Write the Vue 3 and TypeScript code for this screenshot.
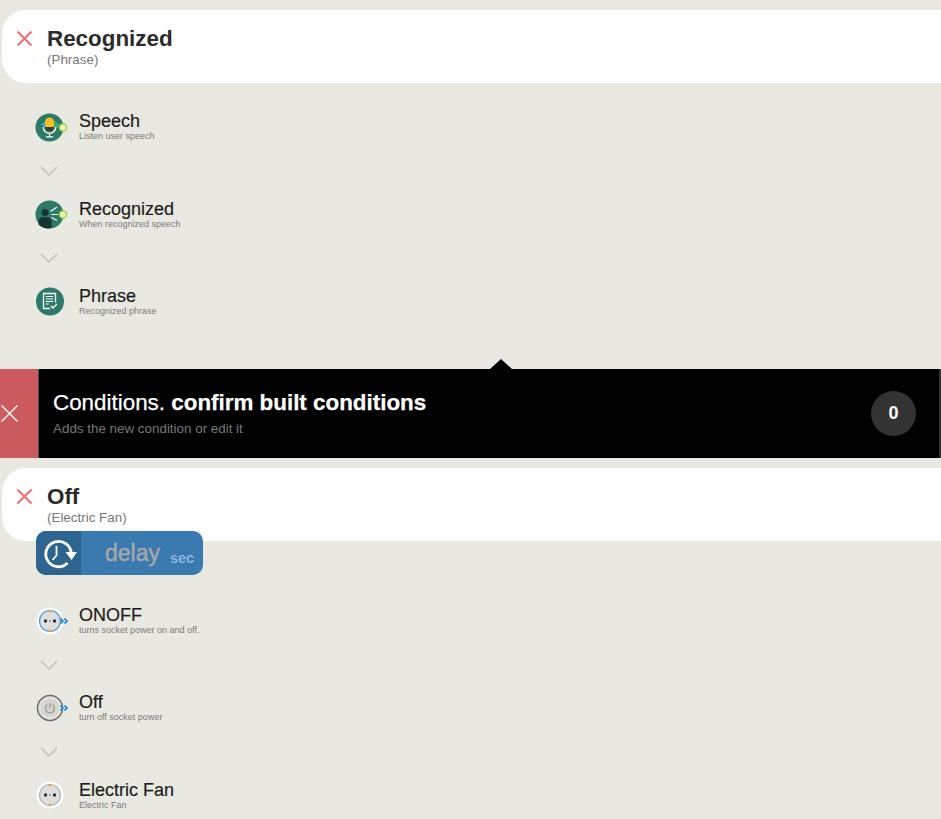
<script setup lang="ts">
interface Step {
  icon: string;
  title: string;
  sub: string;
  lift?: boolean;
}

const triggerSteps: Step[] = [
  { icon: 'speech', title: 'Speech', sub: 'Listen user speech', lift: true },
  { icon: 'recognized', title: 'Recognized', sub: 'When recognized speech' },
  { icon: 'phrase', title: 'Phrase', sub: 'Recognized phrase' },
];

const actionSteps: Step[] = [
  { icon: 'onoff', title: 'ONOFF', sub: 'turns socket power on and off.', lift: true },
  { icon: 'off', title: 'Off', sub: 'turn off socket power', lift: true },
  { icon: 'socket', title: 'Electric Fan', sub: 'Electric Fan' },
];
</script>

<template>
  <div class="page">
    <div class="card">
      <svg class="card-x" width="17" height="17" viewBox="0 0 17 17">
        <path d="M1.5 1.5l14 14M15.5 1.5l-14 14" />
      </svg>
      <div class="card-text">
        <div class="card-title">Recognized</div>
        <div class="card-sub">(Phrase)</div>
      </div>
    </div>

    <div class="steps steps-top">
      <template v-for="(step, i) in triggerSteps" :key="step.title">
        <div class="step">
          <svg class="step-icon" width="40" height="40" viewBox="0 0 40 40">
            <template v-if="step.icon === 'speech'">
              <circle cx="19.5" cy="20.500" r="14" fill="#2d7a68" />
              <path d="M10.500 17.500l5-3.500v7z" fill="#2a9fd0" />
              <path d="M24 13l6 5.500-6 5.500z" fill="#37a86f" />
              <rect x="15" y="10.500" width="9" height="14" rx="4.500" fill="#f3c01c" />
              <path d="M15 20h9v0.500a4.500 4 0 0 1-9 0z" fill="#2c3f3a" />
              <path d="M13.200 20a6.300 6.300 0 0 0 12.600 0M19.500 26.500v3M16 29.800h7" fill="none" stroke="#fff" stroke-width="1.200" />
              <circle cx="33" cy="20.500" r="3.600" fill="#e6f5c0" stroke="#9fd03c" stroke-width="1.500" />
            </template>
            <template v-else-if="step.icon === 'recognized'">
              <circle cx="19.500" cy="20.500" r="14" fill="#2d7a68" />
              <circle cx="15" cy="18.500" r="3.600" fill="#17352f" />
              <path d="M8.500 30.500v-4a6.500 3.500 0 0 1 13 0V34a14 14 0 0 1-13-3.500z" fill="#17352f" />
              <path d="M20.500 17.500l6.500-4.500M21.500 20.500h6.500M21.500 23.500l5.500 3" fill="none" stroke="#fff" stroke-width="1.200" />
              <circle cx="33" cy="20.500" r="3.600" fill="#e6f5c0" stroke="#9fd03c" stroke-width="1.500" />
            </template>
            <template v-else-if="step.icon === 'phrase'">
              <circle cx="20" cy="20.500" r="14" fill="#2d7a68" />
              <path d="M20 27.500h-6.500v-15h12v9" fill="none" stroke="#fff" stroke-width="1.300" />
              <path d="M15.800 15.500h7.400M15.800 18h7.400M15.800 20.500h7.400M15.800 23h3" fill="none" stroke="#fff" stroke-width="1" />
              <path d="M21 25l2 2 4-4" fill="none" stroke="#fff" stroke-width="1.300" />
            </template>
          </svg>
          <div :class="{ lifted: step.lift }">
            <div class="step-title">{{ step.title }}</div>
            <div class="step-sub">{{ step.sub }}</div>
          </div>
        </div>
        <div v-if="i < triggerSteps.length - 1" class="step-link">
          <svg width="18" height="10" viewBox="0 0 18 10"><path d="M1 1l8 8 8-8" /></svg>
        </div>
      </template>
    </div>

    <div class="bar">
      <span class="bar-notch"></span>
      <div class="bar-close">
        <svg width="19" height="19" viewBox="0 0 19 19">
          <path d="M1.5 1.5l16 16M17.5 1.5l-16 16" />
        </svg>
      </div>
      <div class="bar-text">
        <div class="bar-title">Conditions. <b>confirm built conditions</b></div>
        <div class="bar-sub">Adds the new condition or edit it</div>
      </div>
      <div class="bar-count">0</div>
    </div>

    <div class="card">
      <svg class="card-x" width="17" height="17" viewBox="0 0 17 17">
        <path d="M1.5 1.5l14 14M15.5 1.5l-14 14" />
      </svg>
      <div class="card-text">
        <div class="card-title">Off</div>
        <div class="card-sub">(Electric Fan)</div>
      </div>
    </div>

    <div class="delay">
      <div class="delay-icon">
        <svg width="36" height="36" viewBox="0 0 36 36">
          <path d="M30.200 19A12.700 12.700 0 1 0 26.500 28" fill="none" stroke="#fff" stroke-width="2.800" />
          <path d="M24.500 17H36l-5.500 8z" fill="#fff" />
          <path d="M15.500 11v9.500l-4 4.500" fill="none" stroke="#fff" stroke-width="1.800" />
        </svg>
      </div>
      <span class="delay-label">delay</span>
      <span class="delay-unit">sec</span>
    </div>

    <div class="steps steps-bottom">
      <template v-for="(step, i) in actionSteps" :key="step.title">
        <div class="step">
          <svg class="step-icon" width="40" height="40" viewBox="0 0 40 40">
            <template v-if="step.icon === 'onoff' || step.icon === 'socket'">
              <circle cx="20" cy="20" r="13.500" fill="#fff" />
              <circle cx="20" cy="20" r="10.500" fill="#dedede" :stroke="step.icon === 'onoff' ? '#4a9ad4' : '#b4b4b4'" stroke-width="1.200" />
              <circle cx="15.500" cy="20" r="1.700" fill="#333" />
              <circle cx="24.500" cy="20" r="1.700" fill="#333" />
              <circle cx="20" cy="20" r="0.900" fill="#888" />
              <path d="M20 9v2.500M20 28.500V31" stroke="#e8a33c" stroke-width="2.200" />
            </template>
            <template v-else-if="step.icon === 'off'">
              <circle cx="20" cy="20" r="12.500" fill="#e4e4de" stroke="#6a6a6a" stroke-width="1.500" />
              <circle cx="20" cy="20" r="9.500" fill="#d6d6d0" />
              <path d="M17.300 16.800a4.500 4.500 0 1 0 5.400 0" fill="none" stroke="#a2a29c" stroke-width="1.500" />
              <path d="M20 14.500v5" stroke="#a2a29c" stroke-width="1.500" />
            </template>
            <path v-if="step.icon !== 'socket'" d="M30.500 17.500l2.500 2.500-2.500 2.500M34.500 17.500l2.500 2.500-2.500 2.500" fill="none" stroke="#2a8fd8" stroke-width="1.800" />
          </svg>
          <div :class="{ lifted: step.lift }">
            <div class="step-title">{{ step.title }}</div>
            <div class="step-sub">{{ step.sub }}</div>
          </div>
        </div>
        <div v-if="i < actionSteps.length - 1" class="step-link">
          <svg width="18" height="10" viewBox="0 0 18 10"><path d="M1 1l8 8 8-8" /></svg>
        </div>
      </template>
    </div>
  </div>
</template>

<style scoped>
.page {
  width: 941px;
  height: 819px;
  overflow: hidden;
  padding-top: 10px;
  box-sizing: border-box;
  background: #eae9e1;
  font-family: "Liberation Sans", Arial, sans-serif;
}

/* Header cards */
.card {
  height: 73px;
  margin-left: 2px;
  display: flex;
  align-items: center;
  gap: 14px;
  padding-left: 14px;
  box-sizing: border-box;
  background: #fff;
  border-radius: 24px 0 0 24px;
}

.card-x {
  flex: none;
  align-self: flex-start;
  margin-top: 20px;
}

.card-x path {
  fill: none;
  stroke: #ec7476;
  stroke-width: 2.2;
}

.card-text {
  padding-bottom: 2px;
}

.card-title {
  font-size: 22.4px;
  line-height: 28px;
  font-weight: 700;
  color: #2b2b2b;
}

.card-sub {
  font-size: 13.4px;
  line-height: 14px;
  color: #777;
}

/* Steps */
.steps {
  padding-left: 30px;
}

.steps-top {
  padding-top: 24px;
  padding-bottom: 48px;
}

.steps-bottom {
  padding-top: 26px;
}

.step {
  height: 40px;
  display: flex;
  align-items: center;
  gap: 9px;
}

.step-icon {
  flex: none;
}

.lifted {
  margin-bottom: 2px;
}

.step-title {
  font-size: 18px;
  line-height: 20px;
  color: #1d1d1d;
  -webkit-text-stroke: 0.2px #1d1d1d;
}

.step-sub {
  font-size: 9px;
  line-height: 11px;
  color: #7b7b7b;
}

.step-link {
  height: 47px;
  display: flex;
  align-items: center;
  padding-left: 10px;
}

.step-link path {
  fill: none;
  stroke: #c9c9c3;
  stroke-width: 1.8;
}

/* Conditions bar */
.bar {
  position: relative;
  height: 89px;
  display: flex;
  align-items: center;
  margin-bottom: 10px;
  background: #000;
  border-right: 2px solid #333;
}

.bar-notch {
  position: absolute;
  left: 490px;
  top: -10px;
  border-left: 11px solid transparent;
  border-right: 11px solid transparent;
  border-bottom: 10px solid #000;
}

.bar-close {
  width: 38px;
  height: 100%;
  display: flex;
  align-items: center;
  justify-content: flex-start;
  background: #cb5b5e;
  border-right: 1px solid #555;
}

.bar-close path {
  fill: none;
  stroke: #fff;
  stroke-width: 1.4;
}

.bar-text {
  flex: 1;
  padding-left: 14px;
  padding-bottom: 2px;
}

.bar-title {
  font-size: 22.4px;
  line-height: 28px;
  color: #fff;
  -webkit-text-stroke: 0.25px #fff;
}

.bar-sub {
  margin-top: 4px;
  font-size: 13.4px;
  line-height: 16px;
  color: #777;
}

.bar-count {
  width: 45px;
  height: 45px;
  margin-right: 23px;
  display: flex;
  align-items: center;
  justify-content: center;
  border-radius: 50%;
  background: #333;
  color: #fff;
  font-size: 18px;
  font-weight: 700;
}

/* Delay control */
.delay {
  position: relative;
  width: 167px;
  height: 44px;
  margin: -10px 0 0 36px;
  display: flex;
  align-items: center;
  overflow: hidden;
  border-radius: 10px;
  background: #3a7ab0;
}

.delay-icon {
  width: 45px;
  height: 100%;
  display: flex;
  align-items: center;
  justify-content: center;
  background: #2e6590;
}

.delay-label {
  margin-left: 24px;
  font-size: 23px;
  color: #a8a8a8;
  -webkit-text-stroke: 0.4px #a8a8a8;
}

.delay-unit {
  margin: 10px 0 0 10px;
  font-size: 14.5px;
  font-weight: 700;
  color: #8db6da;
}
</style>
